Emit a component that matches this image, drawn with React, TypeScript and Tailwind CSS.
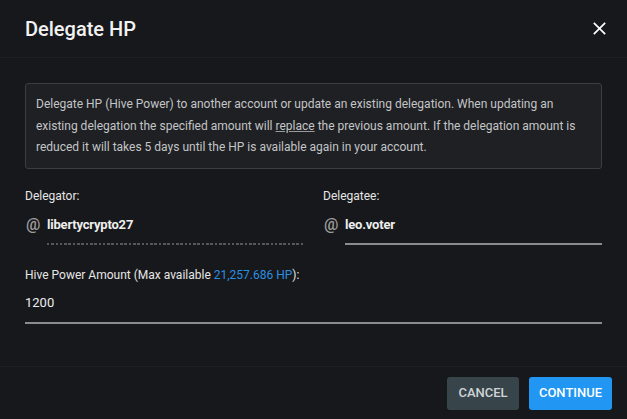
import React from "react";

export default function App() {
  return (
    <div className="w-[627px] h-[419px] bg-[#17181b] text-white flex flex-col" style={{ fontFamily: "Roboto, 'Liberation Sans', sans-serif" }}>
      <div className="h-[58px] flex items-center justify-between pl-[25px] pr-[19px] border-b border-[#1f2023] shrink-0">
        <h1 className="text-[20px] font-medium text-[#f2f2f2]">Delegate HP</h1>
        <svg width="17" height="17" viewBox="0 0 24 24" className="text-white">
          <path d="M4 4 L20 20 M20 4 L4 20" stroke="currentColor" strokeWidth="2.4" fill="none" />
        </svg>
      </div>
      <div className="flex-1 px-[25px] pt-[25px]">
        <div className="rounded-[3px] border border-[#3a3d41] bg-[#1e2023] px-[10px] pt-[10px] pb-[9px] text-[12px] leading-[21.5px] text-[#c4c5c7]">
          Delegate HP (Hive Power) to another account or update an existing delegation. When updating an existing delegation the specified amount will <span className="underline decoration-[#9a9a9a]">replace</span> the previous amount. If the delegation amount is reduced it will takes 5 days until the HP is available again in your account.
        </div>
        <div className="grid grid-cols-2 gap-[19px] mt-[18px]">
          <div>
            <div className="text-[12px] text-[#e6e6e6]">Delegator:</div>
            <div className="flex items-start mt-[10px]">
              <span className="text-[16px] font-medium text-[#9e9e9e] w-[22px] pl-[1px] leading-[20px]">@</span>
              <div className="flex-1">
                <div className="text-[13px] font-bold text-[#eeeeee] leading-[20px] tracking-[-0.2px]">libertycrypto27</div>
                <div className="mt-[8px] h-[2px] w-[256px] bg-[repeating-linear-gradient(90deg,#55575a_0px,#55575a_2.5px,transparent_2.5px,transparent_4.3px)]"></div>
              </div>
            </div>
          </div>
          <div>
            <div className="text-[12px] text-[#e6e6e6]">Delegatee:</div>
            <div className="flex items-start mt-[10px]">
              <span className="text-[16px] font-medium text-[#9e9e9e] w-[22px] pl-[1px] leading-[20px]">@</span>
              <div className="flex-1">
                <div className="text-[13px] font-bold text-[#eeeeee] leading-[20px] tracking-[-0.2px]">leo.voter</div>
                <div className="mt-[8px] h-[2px] bg-[#8a8b8d]"></div>
              </div>
            </div>
          </div>
        </div>
        <div className="mt-[21px]">
          <div className="text-[12px] text-[#e6e6e6]">
            Hive Power Amount (Max available <span className="text-[#2b8fe0]">21,257.686 HP</span>):
          </div>
          <div className="text-[13px] text-[#eeeeee] mt-[9px] leading-[20px]">1200</div>
          <div className="mt-[9px] h-[2px] bg-[#8a8b8d]"></div>
        </div>
      </div>
      <div className="h-[53px] border-t border-[#1f2023] flex items-center justify-end gap-[10px] pr-[15px] shrink-0">
        <button className="h-[33px] w-[72px] rounded-[3px] bg-[#37454b] text-[13px] font-medium text-[#d0d4d6]">CANCEL</button>
        <button className="h-[33px] w-[83px] rounded-[3px] bg-[#2196f3] text-[13px] font-medium text-white">CONTINUE</button>
      </div>
    </div>
  );
}
